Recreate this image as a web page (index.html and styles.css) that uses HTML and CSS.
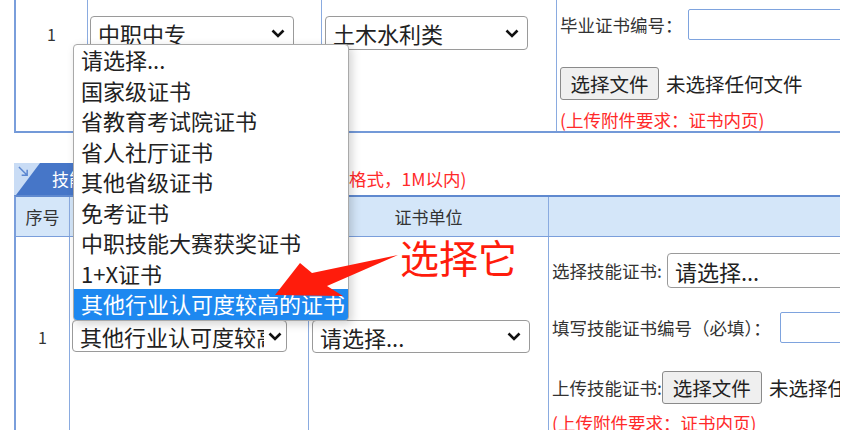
FILE: index.html
```html
<!DOCTYPE html>
<html lang="zh-CN">
<head>
    <meta charset="UTF-8">
    <meta name="viewport" content="width=device-width, initial-scale=1.0">
    <title>证书信息</title>
    <link rel="stylesheet" href="styles.css">
</head>
<body>
    <div class="page">
        <!-- 毕业证书 -->
        <div class="row upper">
            <div class="cell idx">1</div>
            <div class="cell pick">
                <div class="select school">
                    <span class="val">中职中专</span>
                    <svg class="chev" viewBox="0 0 14 9"><polyline points="1.5,1.5 7,7 12.5,1.5"/></svg>
                </div>
            </div>
            <div class="cell pick">
                <div class="select major">
                    <span class="val">土木水利类</span>
                    <svg class="chev" viewBox="0 0 14 9"><polyline points="1.5,1.5 7,7 12.5,1.5"/></svg>
                </div>
            </div>
            <div class="cell info">
                <div class="line first">
                    <span class="label">毕业证书编号：</span>
                    <input type="text" class="text-in">
                </div>
                <div class="line upload">
                    <button type="button" class="file-btn">选择文件</button>
                    <span class="file-name">未选择任何文件</span>
                </div>
                <div class="tip">(上传附件要求：证书内页)</div>
            </div>
        </div>

        <!-- 技能证书 -->
        <div class="bar">
            <div class="tab">
                <svg class="tab-icon" viewBox="0 0 12 12"><path d="M1 1 L10 10 M10 4 L10 10 L4 10"/></svg>
                <span class="tab-name">技能证书</span>
            </div>
            <span class="tip">格式，1M以内)</span>
        </div>

        <div class="row lower head">
            <div class="hcell">序号</div>
            <div class="hcell">证书类别</div>
            <div class="hcell">证书单位</div>
            <div class="hcell"></div>
        </div>

        <div class="row lower body">
            <div class="cell idx">1</div>
            <div class="cell pick">
                <div class="select kind">
                    <span class="val">其他行业认可度较高的证书</span>
                    <svg class="chev" viewBox="0 0 14 9"><polyline points="1.5,1.5 7,7 12.5,1.5"/></svg>
                </div>
            </div>
            <div class="cell pick">
                <div class="select unit">
                    <span class="val">请选择...</span>
                    <svg class="chev" viewBox="0 0 14 9"><polyline points="1.5,1.5 7,7 12.5,1.5"/></svg>
                </div>
            </div>
            <div class="cell info">
                <div class="line first">
                    <span class="label">选择技能证书:</span>
                    <div class="select cert"><span class="val">请选择...</span></div>
                </div>
                <div class="line number">
                    <span class="label">填写技能证书编号（必填）：</span>
                    <input type="text" class="text-in">
                </div>
                <div class="line upload">
                    <span class="label">上传技能证书:</span>
                    <button type="button" class="file-btn">选择文件</button>
                    <span class="file-name">未选择任何文件</span>
                </div>
                <div class="tip">(上传附件要求：证书内页)</div>
            </div>
        </div>

        <!-- 展开的下拉列表 -->
        <ul class="dropdown">
            <li>请选择...</li>
            <li>国家级证书</li>
            <li>省教育考试院证书</li>
            <li>省人社厅证书</li>
            <li>其他省级证书</li>
            <li>免考证书</li>
            <li>中职技能大赛获奖证书</li>
            <li>1+X证书</li>
            <li class="active">其他行业认可度较高的证书</li>
        </ul>

        <svg class="pointer" viewBox="0 0 840 430">
            <polygon points="275,295 300,263 312,273 398,255 327,286 343,296"/>
        </svg>
        <div class="callout">选择它</div>
    </div>
</body>
</html>
```

FILE: styles.css
```css
body{
    margin: 0;
    background-color: #fff;
    font-family: "Noto Sans CJK SC", "Liberation Sans", sans-serif;
    color: #333;
}

.page{
    position: relative;
    width: 840px;
    height: 430px;
    overflow: hidden;
}

.row{
    display: grid;
    margin-left: 14px;
    border-left: 2px solid #7a9edb;
    box-sizing: border-box;
}

.upper{
    grid-template-columns: 72px 234px 235px 1fr;
    height: 133px;
    border-bottom: 2px solid #7399d8;
}

.lower{
    grid-template-columns: 54px 239px 240px 1fr;
}

.cell{
    border-right: 1px solid #8aabe0;
    box-sizing: border-box;
}

.cell:last-child, .hcell:last-child{
    border-right: none;
}

.idx{
    text-align: center;
    font-size: 16px;
    line-height: 20px;
}

.upper .idx{
    padding-top: 24px;
}

.upper .pick{
    padding-top: 16px;
}

.upper .info{
    padding: 9px 0 0 3px;
}

/* 下拉框 */
.select{
    display: flex;
    align-items: center;
    box-sizing: border-box;
    height: 34px;
    padding: 0 8px 0 7px;
    border: 1px solid #9a9a9a;
    border-radius: 4px;
    background-color: #fff;
    font-size: 22px;
    color: #222;
    white-space: nowrap;
}

.select .val{
    flex: 1;
    overflow: hidden;
    line-height: 30px;
}

.chev{
    width: 14px;
    height: 9px;
    margin-left: 4px;
    fill: none;
    stroke: #111;
    stroke-width: 2.6;
}

.school{
    width: 204px;
    margin-left: 2px;
}

.major{
    width: 203px;
    margin-left: 3px;
}

.kind{
    width: 215px;
    height: 32px;
    margin-left: 2px;
    padding-right: 4px;
}

.unit{
    width: 218px;
    height: 33px;
    margin-left: 3px;
}

.cert{
    width: 200px;
    height: 35px;
    margin-left: 5px;
    flex-shrink: 0;
}

/* 右侧信息 */
.line{
    display: flex;
    align-items: center;
    white-space: nowrap;
}

.label{
    font-size: 17.5px;
    line-height: 20px;
    color: #333;
}

.text-in{
    flex-shrink: 0;
    box-sizing: border-box;
    width: 200px;
    height: 31px;
    margin-left: 5px;
    border: 1px solid #7ea3de;
    border-radius: 2px;
    outline: none;
}

.file-btn{
    flex-shrink: 0;
    box-sizing: border-box;
    width: 99px;
    height: 33px;
    padding: 0;
    border: 1px solid #8a8a8a;
    border-radius: 3px;
    background-color: #efefef;
    font-family: inherit;
    font-size: 19.5px;
    color: #222;
}

.file-name{
    margin-left: 7px;
    font-size: 19.5px;
    color: #222;
}

.upper .upload{
    margin-top: 27px;
}

.tip{
    font-size: 17.5px;
    line-height: 20px;
    color: #ff2a2a;
    white-space: nowrap;
}

.upper .tip{
    margin-top: 10px;
}

/* 技能证书标签 */
.bar{
    display: flex;
    align-items: center;
    height: 32px;
    margin-top: 30px;
    margin-left: 14px;
}

.tab{
    position: relative;
    display: flex;
    width: 335px;
    height: 32px;
    background-color: #c9dcf5;
}

.tab-icon{
    position: absolute;
    left: 4px;
    top: 3px;
    width: 11px;
    height: 11px;
    fill: none;
    stroke: #5b86d0;
    stroke-width: 1.6;
}

.tab-name{
    flex: 1;
    margin-left: 2px;
    padding-left: 36px;
    line-height: 32px;
    font-size: 17px;
    color: #fff;
    background-color: #4676c8;
    clip-path: polygon(24px 0, 100% 0, 100% 100%, 0 100%);
}

.head{
    height: 42px;
    border-top: 2px solid #5f89cf;
    border-bottom: 1px solid #7a9edb;
    background-color: #d4e6f9;
}

.hcell{
    display: flex;
    align-items: center;
    justify-content: center;
    border-right: 1px solid #8aabe0;
    font-size: 17px;
}

.body{
    height: 200px;
}

.body .idx{
    padding-top: 90px;
}

.body .pick{
    padding-top: 83px;
}

.body .info{
    padding: 16px 0 0 3px;
}

.body .number{
    margin-top: 24px;
}

.body .number .text-in{
    margin-left: 9px;
}

.body .upload{
    margin-top: 28px;
}

.body .upload .file-btn{
    width: 100px;
}

.body .tip{
    margin-top: 9px;
}

/* 展开的列表 */
.dropdown{
    position: absolute;
    left: 73px;
    top: 44px;
    width: 276px;
    margin: 0;
    padding: 0;
    list-style: none;
    border: 1px solid #a9a9a9;
    border-radius: 4px;
    background-color: #fff;
    box-shadow: 3px 3px 10px rgba(0, 0, 0, 0.18);
    box-sizing: border-box;
}

.dropdown li{
    height: 30.5px;
    padding-left: 7px;
    font-size: 22px;
    line-height: 29px;
    color: #222;
    white-space: nowrap;
}

.dropdown .active{
    background-color: #1d88f0;
    color: #fff;
    border-radius: 0 0 3px 3px;
}

.pointer{
    position: absolute;
    left: 0;
    top: 0;
    width: 840px;
    height: 430px;
    fill: #ff1c0c;
    pointer-events: none;
}

.callout{
    position: absolute;
    left: 400px;
    top: 232px;
    font-size: 39px;
    line-height: 48px;
    color: #ff1c0c;
}
```
